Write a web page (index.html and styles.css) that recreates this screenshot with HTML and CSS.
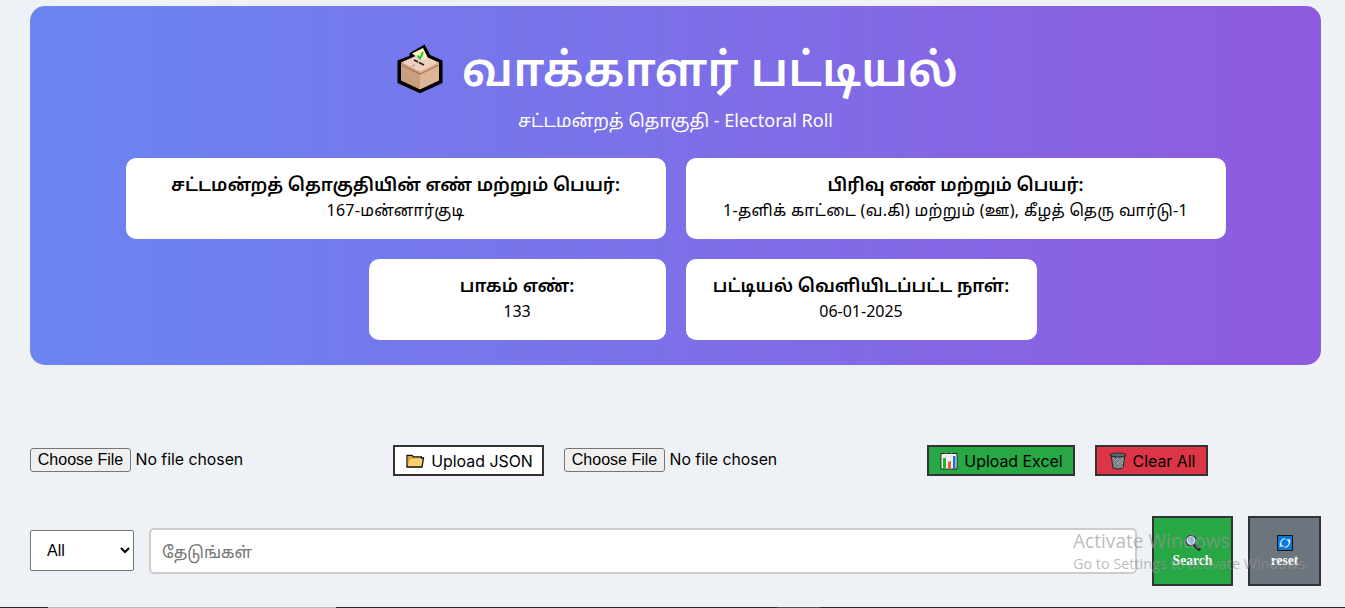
FILE: index.html
```html
<!DOCTYPE html>
<html lang="ta">
<head>
<meta charset="utf-8">
<title>வாக்காளர் பட்டியல்</title>
<link rel="stylesheet" href="styles.css">
</head>
<body>
<main class="page">
  <header class="hero">
    <h1 class="title">
      <svg class="ballot" viewBox="0 0 60 60" width="60" height="60">
        <path d="M9 21.500 21 17 21 14 34 6.500 39 16 51 21.500V42L30 51.500 9 42Z" fill="#000" stroke="#000" stroke-width="3"/>
        <path d="M11 22.500 30 14 49 22.500 30 32.500Z" fill="#f0d0bd"/>
        <path d="M11 22.500 30 31.500V49.500L11 40.500Z" fill="#c99f7d"/>
        <path d="M49 22.500 30 31.500V49.500L49 40.500Z" fill="#dfb597"/>
        <path d="M11 25 30 34 49 25" fill="none" stroke="#a57757" stroke-width="1.300"/>
        <path d="M22 13.500 33 8 38 18 31 20Z" fill="#fbfac2"/>
        <path d="m27.500 15.500 2.500 3L33 12" fill="none" stroke="#20bd32" stroke-width="1.800"/>
        <path d="m24 20 4 2M29 22.500l5 2.500" fill="none" stroke="#202020" stroke-width="1.800"/>
        <circle cx="23.500" cy="25.500" r="1" fill="#8c8f9b"/>
      </svg>
      <span class="title-text">வாக்காளர் பட்டியல்</span>
    </h1>
    <p class="subtitle">சட்டமன்றத் தொகுதி - Electoral Roll</p>
    <div class="cards">
      <div class="card wide"><strong>சட்டமன்றத் தொகுதியின் எண் மற்றும் பெயர்:</strong><span class="tamil">167-மன்னார்குடி</span></div>
      <div class="card wide"><strong>பிரிவு எண் மற்றும் பெயர்:</strong><span class="tamil">1-தளிக் காட்டை (வ.கி) மற்றும் (ஊ), கீழத் தெரு வார்டு-1</span></div>
      <div class="card part"><strong>பாகம் எண்:</strong><span>133</span></div>
      <div class="card date"><strong>பட்டியல் வெளியிடப்பட்ட நாள்:</strong><span>06-01-2025</span></div>
    </div>
  </header>
  <section class="uploads">
    <div class="picker first"><button class="choose">Choose File</button><span>No file chosen</span></div>
    <button class="action json">
      <svg viewBox="0 0 20 16" width="20" height="16"><path d="M2 14V2.500H7L8.500 4H16.500V5H18.500L17 14Z" fill="#ffd071" stroke="#111" stroke-width="1.300"/><path d="M2.700 3.200H6.700L8.200 4.700H15.800V5.500H7L4.500 6.500 3 13Z" fill="#e2a02b"/></svg>
      <span>Upload JSON</span>
    </button>
    <div class="picker second"><button class="choose">Choose File</button><span>No file chosen</span></div>
    <button class="action excel">
      <svg viewBox="0 0 18 18" width="18" height="18"><path d="M1 1.500H17V17H1Z" fill="#f7f5f5" stroke="#222" stroke-width="1"/><path d="M1 5H17M1 9H17M1 13H17M6 1V17M11 1V17" stroke="#dedede" stroke-width=".7"/><path d="M3 6H6V16.500H3Z" fill="#18b91c"/><path d="M8 9.500H11V16.500H8Z" fill="#f15443"/><path d="M13 4H15.500V16.500H13Z" fill="#1073d5"/></svg>
      <span>Upload Excel</span>
    </button>
    <button class="action clear">
      <svg viewBox="0 0 18 18" width="18" height="18"><path d="M2 3 4 16Q9 18.500 14 16L16 3Z" fill="#747d80" stroke="#252929"/><path d="m3 5 11 11M6 4l8 8M10 4l5 5M15 5 5 15M11 4 4 11M14 9l-6 7" stroke="#a3afb2" stroke-width=".7"/><ellipse cx="9" cy="3" rx="7.700" ry="2" fill="#59686c" stroke="#242b2c" stroke-width="1.200"/></svg>
      <span>Clear All</span>
    </button>
  </section>
  <section class="search">
    <select class="filter"><option>All</option></select>
    <input class="query" placeholder="தேடுங்கள்">
    <button class="tile go">
      <svg viewBox="0 0 18 18" width="18" height="18"><path d="m10 10 5 5" stroke="#202328" stroke-width="3.600" stroke-linecap="round"/><circle cx="7" cy="6.500" r="5" fill="#9acce7" stroke="#39424a" stroke-width="1.500"/><circle cx="7" cy="6.500" r="4" fill="none" stroke="#d5e9f2"/><path d="m11.500 11 3.500 3.500" stroke="#67656b" stroke-width="1.300"/></svg>
      <span>Search</span>
    </button>
    <button class="tile reset">
      <svg viewBox="0 0 18 18" width="18" height="18"><path d="M1.500 1.500H16.500V16.500H1.500Z" fill="#0879d8" stroke="#111"/><path d="M5.500 11.500A4.300 4.300 0 0 1 9.500 4.800M12.500 6.500A4.300 4.300 0 0 1 8.500 13.200M4.300 8.800V12.200H7.500M13.700 9.200V5.800H10.500" fill="none" stroke="#d3e9fb" stroke-width="1.200"/></svg>
      <span>reset</span>
    </button>
  </section>
</main>
<div class="table-edge"><i></i><b></b><i></i><em></em><i></i></div>
<aside class="watermark"><div class="w1">Activate Windows</div><div class="w2">Go to Settings to activate Windows.</div></aside>
</body>
</html>
```
FILE: styles.css
```css
*{box-sizing:border-box}
body{margin:0;height:608px;overflow:hidden;background:#eef2f7;color:#000;font-family:"Noto Sans","Noto Sans Tamil",sans-serif;display:flex;flex-direction:column}
.page{height:607px;padding:6px 24px 0 30px}
.hero{height:359px;border-radius:15px;background:linear-gradient(90deg,#6a85f1,#8f5ae0);color:#fff;padding-top:33px;display:flex;flex-direction:column;align-items:center}
.title{margin:0;height:62px;padding-right:3px;display:flex;align-items:center;font-size:46.500px;line-height:62px;font-weight:650;white-space:nowrap}
.title-text{margin-left:12px;padding-bottom:5px}
.subtitle{margin:0;height:29px;padding-top:6px;font-size:18px;line-height:26px;white-space:nowrap}
.cards{width:1100px;margin-top:28px;display:grid;grid-template-columns:540px 540px;gap:20px}
.card{height:81px;padding-top:13px;background:#fff;color:#000;border-radius:10px;display:flex;flex-direction:column;align-items:center;white-space:nowrap;font-size:16px;line-height:26px}
.card strong{font-size:18px;font-weight:600}
.tamil{letter-spacing:.3px}
.part{width:297px;justify-self:end}
.date{width:351px}
.uploads{margin-top:80px;height:31px;display:flex;align-items:center;font:15.800px/20px Inter,sans-serif}
.picker{display:flex;align-items:center;gap:4.500px;white-space:nowrap;padding-bottom:2px}
.picker span{padding-top:1px}
.first{width:363px}
.second{width:343px;margin:0 0 0 20px}
.second + .action{margin-left:20px}
.choose{width:101px;height:24px;padding:0;border:1px solid #767676;border-radius:3px;background:#efefef;font:16px/20px "Liberation Sans",sans-serif;color:#000}
.action{height:31px;border:2px solid #333;padding:1px 0 0 1px;display:flex;align-items:center;justify-content:center;gap:6px;white-space:nowrap;font:15.900px/20px Inter,sans-serif;color:#000}
.action span{padding-top:2px}
.json{width:151px;background:#fff}
.excel{width:148px;background:#28a745}
.clear{width:113px;margin-left:20px;background:#dc3545}
.search{height:70px;margin-top:40px;display:flex;align-items:center}
.filter{width:104px;height:41px;margin-bottom:1px;padding:0 12px;border:1px solid #767676;border-radius:2px;background-color:#fff;font:16px "Liberation Sans",sans-serif;color:#000}
.query{width:988px;height:46px;margin-left:15px;padding:0 11px;border:2px solid #ccc;border-radius:5px;background:#fff;font:16.400px "Noto Sans","Noto Sans Tamil",sans-serif}
.query::placeholder{color:#757575}
.tile{height:70px;margin-left:15px;padding:0;border:2px solid #333;display:flex;flex-direction:column;align-items:center;justify-content:center;color:#fff;font:bold 13.600px/18px "Liberation Serif",serif}
.tile svg{margin-top:1px}
.go{width:81px;background:#28a745}
.reset{width:73px;background:#6c757d}
.table-edge{height:1px;display:grid;grid-template-columns:48px 288px 441px 43px 1fr}
.table-edge i{background:#242630}
.table-edge b{background:#babdc2}
.table-edge em{background:#4d4f57}
.watermark{position:absolute;left:1073px;top:530px;color:rgba(150,150,150,.65);font-family:"Open Sans",sans-serif;white-space:nowrap;pointer-events:none}
.w1{font-size:19.100px;line-height:23px}
.w2{font-size:14.400px;line-height:22px}
```
